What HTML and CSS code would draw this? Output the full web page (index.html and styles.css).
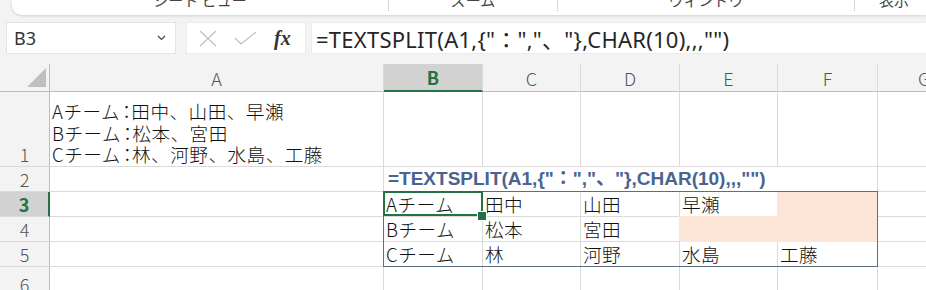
FILE: index.html
```html
<!DOCTYPE html>
<html lang="ja">
<head>
    <meta charset="UTF-8">
    <title>TEXTSPLIT</title>
    <link rel="stylesheet" href="styles.css">
</head>
<body>
    <!-- リボン下端 -->
    <div class="ribbon">
        <div class="ribbon-group g1"><span>シート ビュー</span></div>
        <div class="ribbon-group g2"><span>ズーム</span></div>
        <div class="ribbon-group g3"><span>ウィンドウ</span></div>
        <div class="ribbon-group g4"><span>表示</span></div>
    </div>

    <!-- 数式バー -->
    <div class="formula-bar">
        <div class="name-box">
            <span>B3</span>
            <svg width="9" height="6" viewBox="0 0 9 6"><path d="M1 1 L4.5 4.5 L8 1" fill="none" stroke="#444" stroke-width="1.2"/></svg>
        </div>
        <div class="fx-box">
            <svg width="18" height="17" viewBox="0 0 18 17"><path d="M1 1 L17 16 M17 1 L1 16" stroke="#bdbdbd" stroke-width="1.1"/></svg>
            <svg width="23" height="14" viewBox="0 0 23 14"><path d="M1 7 L7 13 L22 1" fill="none" stroke="#bdbdbd" stroke-width="1.1"/></svg>
            <span class="fx">fx</span>
        </div>
        <div class="formula-input">=TEXTSPLIT(A1,{"：","、"},CHAR(10),,,"")</div>
    </div>

    <!-- シート -->
    <div class="sheet">
        <div class="cell corner">
            <svg width="19" height="19" viewBox="0 0 19 19"><path d="M19 0 L19 19 L0 19 Z" fill="#bfbfbf"/></svg>
        </div>
        <div class="cell col-head">A</div>
        <div class="cell col-head selected">B</div>
        <div class="cell col-head">C</div>
        <div class="cell col-head">D</div>
        <div class="cell col-head">E</div>
        <div class="cell col-head">F</div>
        <div class="cell col-head g-col">G</div>

        <div class="cell row-head">1</div>
        <div class="cell txt multi">Aチーム<span class="colon">：</span>田中、山田、早瀬<br>Bチーム<span class="colon">：</span>松本、宮田<br>Cチーム<span class="colon">：</span>林、河野、水島、工藤</div>
        <div class="cell"></div>
        <div class="cell"></div>
        <div class="cell"></div>
        <div class="cell"></div>
        <div class="cell"></div>
        <div class="cell"></div>

        <div class="cell row-head">2</div>
        <div class="cell"></div>
        <div class="cell txt formula-cell">=TEXTSPLIT(A1,{"：","、"},CHAR(10),,,"")</div>
        <div class="cell"></div>

        <div class="cell row-head selected">3</div>
        <div class="cell"></div>
        <div class="range">
            <div class="rc txt active">Aチーム</div>
            <div class="rc txt">田中</div>
            <div class="rc txt">山田</div>
            <div class="rc txt">早瀬</div>
            <div class="rc txt fill fill-l last-c"></div>

            <div class="rc txt">Bチーム</div>
            <div class="rc txt">松本</div>
            <div class="rc txt">宮田</div>
            <div class="rc txt fill fill-lt"></div>
            <div class="rc txt fill last-c"></div>

            <div class="rc txt last-r">Cチーム</div>
            <div class="rc txt last-r">林</div>
            <div class="rc txt last-r">河野</div>
            <div class="rc txt last-r">水島</div>
            <div class="rc txt last-r last-c">工藤</div>
        </div>
        <div class="cell"></div>

        <div class="cell row-head">4</div>
        <div class="cell"></div>
        <div class="cell"></div>

        <div class="cell row-head">5</div>
        <div class="cell"></div>
        <div class="cell"></div>

        <div class="cell row-head">6</div>
        <div class="cell"></div>
        <div class="cell"></div>
        <div class="cell"></div>
        <div class="cell"></div>
        <div class="cell"></div>
        <div class="cell"></div>
        <div class="cell"></div>
    </div>
</body>
</html>
```

FILE: styles.css
```css
* {
    margin: 0;
    padding: 0;
    box-sizing: border-box;
}

body {
    width: 926px;
    height: 290px;
    overflow: hidden;
    background-color: #f3f3f3;
    font-family: "Noto Sans", "Noto Sans CJK JP", sans-serif;
    color: #333;
}

/* リボン */
.ribbon {
    height: 15px;
    margin-left: 12px;
    display: flex;
    overflow: hidden;
    background-color: #fff;
    border-radius: 0 0 0 10px;
    box-shadow: 0 1px 3px rgba(0, 0, 0, 0.15);
}

.ribbon-group {
    display: flex;
    justify-content: center;
    align-items: flex-start;
    height: 11px;
    border-right: 1px solid #d6d6d6;
    font-family: "Noto Sans CJK JP", sans-serif;
    font-size: 15px;
    line-height: 15px;
    color: #444;
}

.ribbon-group span {
    margin-top: -8px;
}

.g1 { width: 377px; }
.g2 { width: 169px; }
.g3 { width: 297px; }
.g4 { flex: 1; border-right: none; justify-content: flex-start; padding-left: 24px; }

/* 数式バー */
.formula-bar {
    display: flex;
    align-items: stretch;
    height: 32px;
    margin-top: 7px;
    padding-left: 6px;
}

.name-box {
    width: 170px;
    display: flex;
    align-items: center;
    justify-content: space-between;
    padding: 0 9px 0 7px;
    background-color: #fff;
    border: 1px solid #e3e3e3;
    font-size: 18px;
}

.fx-box {
    width: 120px;
    margin-left: 10px;
    display: flex;
    align-items: center;
    gap: 17px;
    padding-left: 12px;
    background-color: #fff;
    border: 1px solid #ebebeb;
}

.fx {
    font-family: "Liberation Serif", serif;
    font-style: italic;
    font-weight: bold;
    font-size: 20px;
    color: #333;
}

.formula-input {
    flex: 1;
    margin-left: 5px;
    display: flex;
    align-items: center;
    padding-left: 4px;
    background-color: #fff;
    border: 1px solid #ebebeb;
    border-right: none;
    font-size: 22px;
    letter-spacing: 0.25px;
    white-space: nowrap;
    color: #262626;
}

/* シート */
.sheet {
    margin-top: 10px;
    display: grid;
    grid-template-columns: 50px 334px 99px 98px 99px 98px 100px 1fr;
    grid-template-rows: 28px 75px 25px 25px 25px 25px 30px;
    background-color: #fff;
}

.cell {
    border-right: 1px solid #dadada;
    border-bottom: 1px solid #dadada;
}

.corner {
    display: flex;
    justify-content: flex-end;
    align-items: flex-end;
    padding: 0 3px 4px 0;
    background-color: #f3f3f3;
    border-bottom-color: #bdbdbd;
    border-right-color: #bdbdbd;
}

.col-head {
    display: flex;
    align-items: center;
    justify-content: center;
    background-color: #f3f3f3;
    border-bottom-color: #bdbdbd;
    font-family: "Noto Sans CJK JP", sans-serif;
    font-weight: 300;
    font-size: 18px;
    color: #555;
}

.col-head.selected {
    background-color: #d2d2d2;
    border-bottom: 2px solid #217346;
    color: #217346;
    font-weight: bold;
}

.g-col {
    border-right: none;
    justify-content: flex-start;
    padding-left: 40px;
}

.row-head {
    grid-column: 1;
    display: flex;
    align-items: flex-end;
    justify-content: center;
    padding-bottom: 1px;
    background-color: #f3f3f3;
    border-right-color: #bdbdbd;
    font-family: "Noto Sans CJK JP", sans-serif;
    font-weight: 300;
    font-size: 18px;
    line-height: 22px;
    color: #555;
}

.row-head.selected {
    background-color: #d2d2d2;
    border-right: 2px solid #217346;
    color: #217346;
    font-weight: bold;
}

.txt {
    display: flex;
    align-items: flex-end;
    padding: 0 0 1px 2px;
    font-family: "Noto Sans CJK JP", sans-serif;
    font-weight: 300;
    font-size: 18.6px;
    line-height: 22px;
    letter-spacing: 0.5px;
    color: #111;
    white-space: nowrap;
}

.multi {
    display: block;
    align-self: stretch;
    padding-top: 8px;
    line-height: 21.5px;
}

.colon {
    margin-left: -3px;
    letter-spacing: -4.5px;
}

.formula-cell {
    grid-column: 3 / 8;
    padding-left: 4px;
    font-family: "Liberation Sans", "Noto Sans CJK JP", sans-serif;
    font-weight: bold;
    font-size: 19px;
    letter-spacing: 0;
    color: #4b6391;
}

/* 出力範囲 */
.range {
    grid-column: 3 / 8;
    grid-row: 4 / 7;
    margin: -1px 0 0 -1px;
    display: grid;
    grid-template-columns: 99px 98px 99px 98px 1fr;
    grid-template-rows: 25px 25px 1fr;
    border: 1px solid #5d6e7e;
    position: relative;
    z-index: 1;
}

.rc {
    border-right: 1px solid #dadada;
    border-bottom: 1px solid #dadada;
}

.rc.last-c { border-right: none; }
.rc.last-r { border-bottom: none; }

.fill {
    background-color: #fce4d6;
    border-color: transparent;
}

.fill-l { box-shadow: -1px 0 0 #fce4d6; }
.fill-lt { box-shadow: -1px -1px 0 #fce4d6; }

.active {
    position: relative;
    z-index: 2;
}

.active::after {
    content: "";
    position: absolute;
    inset: -1px -1px 0 -1px;
    border: 2px solid #217346;
}

.active::before {
    content: "";
    position: absolute;
    right: -5px;
    bottom: -5px;
    width: 8px;
    height: 8px;
    background-color: #217346;
    border: 1px solid #fff;
    z-index: 3;
}
```
